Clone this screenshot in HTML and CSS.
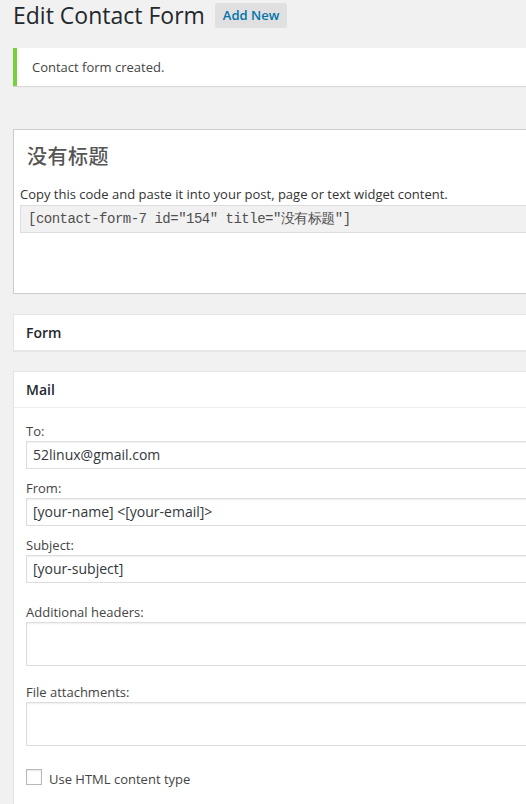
FILE: index.html
```html
<!DOCTYPE html>
<html>
<head>
<meta charset="utf-8">
<link rel="stylesheet" href="styles.css">
</head>
<body>
<div class="wrap">
  <div class="page-head">
    <h1 class="page-title">Edit Contact Form</h1>
    <a class="add-new">Add New</a>
  </div>

  <div class="notice"><p>Contact form created.</p></div>

  <div class="title-box">
    <div class="title-name">没有标题</div>
    <p class="copy-hint">Copy this code and paste it into your post, page or text widget content.</p>
    <div class="shortcode">[contact-form-7 id="154" title="没有标题"]</div>
  </div>

  <div class="panel">
    <div class="panel-head">Form</div>
  </div>

  <div class="panel">
    <div class="panel-head panel-head-line">Mail</div>
    <div class="panel-body">
      <div class="field">
        <label class="field-label">To:</label>
        <div class="text-input">52linux@gmail.com</div>
      </div>
      <div class="field">
        <label class="field-label">From:</label>
        <div class="text-input">[your-name] &lt;[your-email]&gt;</div>
      </div>
      <div class="field">
        <label class="field-label">Subject:</label>
        <div class="text-input">[your-subject]</div>
      </div>
      <div class="field field-headers">
        <label class="field-label">Additional headers:</label>
        <div class="text-area"></div>
      </div>
      <div class="field field-attach">
        <label class="field-label">File attachments:</label>
        <div class="text-area"></div>
      </div>
      <div class="check-row">
        <span class="checkbox"></span>
        <span class="check-label">Use HTML content type</span>
      </div>
    </div>
  </div>
</div>
</body>
</html>
```

FILE: styles.css
```css
html, body {
  margin: 0;
  padding: 0;
  overflow: hidden;
}
body {
  background: #f1f1f1;
  font-family: "Open Sans", sans-serif;
  font-size: 13px;
  color: #444;
}
.wrap {
  width: 640px;
  padding-left: 13px;
}
.page-head {
  display: flex;
  align-items: flex-start;
  height: 48px;
}
.page-title {
  margin: 0;
  padding-top: 1px;
  font-size: 23px;
  font-weight: 400;
  line-height: 29px;
  color: #23282d;
}
.add-new {
  margin-left: 10px;
  margin-top: 3px;
  height: 25px;
  padding: 0 8px;
  background: #e0e0e0;
  border-radius: 2px;
  color: #0073aa;
  font-weight: 600;
  font-size: 13px;
  line-height: 25px;
}
.notice {
  background: #fff;
  border-left: 4px solid #7ad03a;
  box-shadow: 0 1px 1px rgba(0,0,0,.1);
  height: 38px;
  display: flex;
  align-items: center;
  padding-left: 15px;
}
.notice p {
  margin: 0;
  color: #444;
}
.title-box {
  margin-top: 43px;
  height: 163px;
  background: #fff;
  border: 1px solid #ccc;
  padding: 0 6px;
}
.title-name {
  margin-top: 13px;
  padding-left: 7px;
  font-family: "Noto Sans CJK SC", sans-serif;
  font-size: 20px;
  line-height: 26px;
  letter-spacing: 0.5px;
  color: #555;
  font-weight: 500;
}
.copy-hint {
  margin: 17px 0 0;
  line-height: 16px;
  color: #333;
}
.shortcode {
  margin-top: 3px;
  height: 26px;
  background: #f1f1f1;
  border: 1px solid #ddd;
  padding-left: 7px;
  font-family: "Liberation Mono", monospace;
  font-size: 14px;
  letter-spacing: -0.5px;
  line-height: 26px;
  color: #4f4f4f;
  white-space: nowrap;
}
.panel {
  margin-top: 20px;
  background: #fff;
  border: 1px solid #e5e5e5;
  box-shadow: 0 1px 1px rgba(0,0,0,.04);
}
.panel-head {
  height: 35px;
  padding-left: 12px;
  font-size: 14px;
  font-weight: 600;
  line-height: 35px;
  color: #23282d;
}
.panel-head-line {
  border-bottom: 1px solid #eee;
}
.panel-body {
  padding: 13px 12px 20px;
}
.field {
  margin-top: 9px;
}
.field:first-child {
  margin-top: 0;
}
.field-headers {
  margin-top: 19px;
}
.field-attach {
  margin-top: 16px;
}
.field-label {
  display: block;
  line-height: 20px;
  color: #444;
}
.text-input {
  height: 26px;
  border: 1px solid #ddd;
  box-shadow: inset 0 1px 2px rgba(0,0,0,.07);
  padding-left: 6px;
  font-size: 14px;
  line-height: 26px;
  color: #32373c;
  white-space: nowrap;
}
.text-area {
  height: 42px;
  border: 1px solid #ddd;
  box-shadow: inset 0 1px 2px rgba(0,0,0,.07);
}
.check-row {
  margin-top: 23px;
  display: flex;
  align-items: flex-start;
}
.checkbox {
  width: 14px;
  height: 14px;
  border: 1px solid #b4b9be;
  box-shadow: inset 0 1px 2px rgba(0,0,0,.1);
  background: #fff;
}
.check-label {
  margin-left: 7px;
  padding-top: 2px;
  line-height: 16px;
  color: #444;
}
```
